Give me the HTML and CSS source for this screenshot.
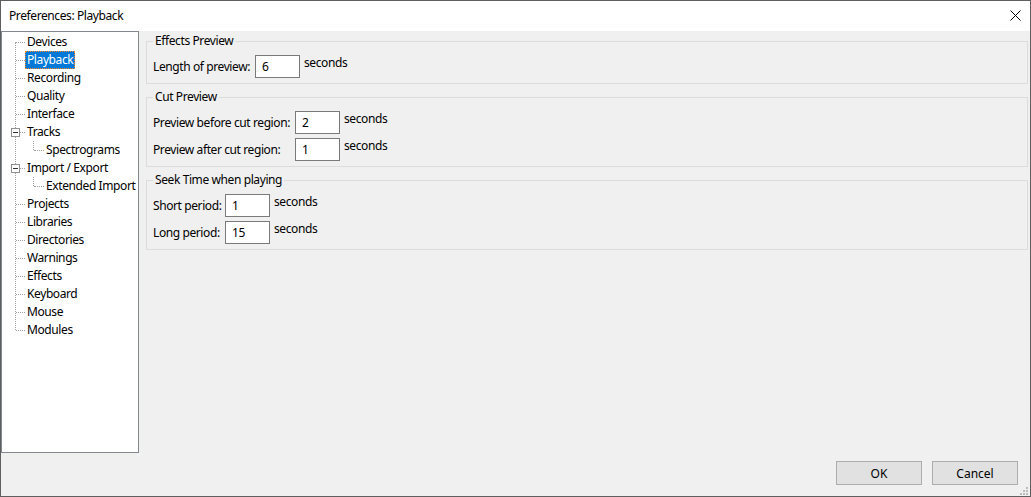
FILE: index.html
```html
<!DOCTYPE html>
<html lang="en">
<head>
    <meta charset="UTF-8">
    <title>Preferences: Playback</title>
    <link rel="stylesheet" href="styles.css">
</head>
<body>
    <div class="window">
        <div class="titlebar">
            <span class="title">Preferences: Playback</span>
            <svg class="close" width="11" height="11" viewBox="0 0 11 11">
                <path d="M0.5 0.5 L10.5 10.5 M10.5 0.5 L0.5 10.5" stroke="#000" stroke-width="1" fill="none"/>
            </svg>
        </div>
        <div class="main">
            <div class="tree">
                <ul class="nodes">
                    <li><span class="label">Devices</span></li>
                    <li><span class="label on">Playback</span></li>
                    <li><span class="label">Recording</span></li>
                    <li><span class="label">Quality</span></li>
                    <li><span class="label">Interface</span></li>
                    <li class="open"><i class="toggle"></i><span class="label">Tracks</span>
                        <ul class="sub">
                            <li><span class="label">Spectrograms</span></li>
                        </ul>
                    </li>
                    <li class="open"><i class="toggle"></i><span class="label">Import / Export</span>
                        <ul class="sub">
                            <li><span class="label">Extended Import</span></li>
                        </ul>
                    </li>
                    <li><span class="label">Projects</span></li>
                    <li><span class="label">Libraries</span></li>
                    <li><span class="label">Directories</span></li>
                    <li><span class="label">Warnings</span></li>
                    <li><span class="label">Effects</span></li>
                    <li><span class="label">Keyboard</span></li>
                    <li><span class="label">Mouse</span></li>
                    <li><span class="label">Modules</span></li>
                </ul>
            </div>
            <div class="panel">
                <fieldset class="group g-effects">
                    <legend>Effects Preview</legend>
                    <div class="rows">
                        <span class="cap">Length of preview:</span><span class="field">6</span><span class="unit">seconds</span>
                    </div>
                </fieldset>
                <fieldset class="group g-cut">
                    <legend>Cut Preview</legend>
                    <div class="rows">
                        <span class="cap">Preview before cut region:</span><span class="field">2</span><span class="unit">seconds</span>
                        <span class="cap">Preview after cut region:</span><span class="field">1</span><span class="unit">seconds</span>
                    </div>
                </fieldset>
                <fieldset class="group g-seek">
                    <legend>Seek Time when playing</legend>
                    <div class="rows">
                        <span class="cap">Short period:</span><span class="field">1</span><span class="unit">seconds</span>
                        <span class="cap">Long period:</span><span class="field">15</span><span class="unit">seconds</span>
                    </div>
                </fieldset>
            </div>
        </div>
        <div class="footer">
            <button class="btn">OK</button>
            <button class="btn">Cancel</button>
        </div>
        <svg class="grip" width="10" height="10" viewBox="0 0 10 10">
            <rect x="7" y="1" width="2" height="2" fill="#bcbcbc"/>
            <rect x="4" y="4" width="2" height="2" fill="#bcbcbc"/>
            <rect x="7" y="4" width="2" height="2" fill="#bcbcbc"/>
            <rect x="1" y="7" width="2" height="2" fill="#bcbcbc"/>
            <rect x="4" y="7" width="2" height="2" fill="#bcbcbc"/>
            <rect x="7" y="7" width="2" height="2" fill="#bcbcbc"/>
        </svg>
    </div>
</body>
</html>
```

FILE: styles.css
```css
*{
    margin: 0;
    padding: 0;
    box-sizing: border-box;
    list-style: none;
}
body{
    font-family: "Noto Sans", "Liberation Sans", sans-serif;
    font-size: 12px;
    letter-spacing: -0.4px;
    color: #000;
    background: #f0f0f0;
}
.window{
    position: relative;
    display: flex;
    flex-direction: column;
    width: 1031px;
    height: 497px;
    border: 1px solid #5f5f5f;
    background: #f0f0f0;
}
.titlebar{
    display: flex;
    align-items: center;
    justify-content: space-between;
    height: 30px;
    padding: 0 9px 1px 8px;
    background: #fff;
}
.title{
    line-height: 16px;
}

/* left tree */
.main{
    display: flex;
    height: 422px;
}
.tree{
    width: 138px;
    height: 100%;
    padding-top: 1px;
    background: #fff;
    border: 1px solid #828790;
}
.nodes, .sub{
    position: relative;
}
.nodes::before{
    content: "";
    position: absolute;
    left: 13px;
    top: 9px;
    bottom: 9px;
    border-left: 1px dotted #a0a0a0;
}
.sub::before{
    content: "";
    position: absolute;
    left: 8px;
    top: 0;
    bottom: 9px;
    border-left: 1px dotted #a0a0a0;
}
.nodes li{
    position: relative;
    padding-left: 23px;
}
.sub li{
    padding-left: 19px;
}
.nodes li::before{
    content: "";
    position: absolute;
    left: 14px;
    top: 9px;
    width: 9px;
    border-top: 1px dotted #a0a0a0;
}
.sub li::before{
    left: 9px;
    width: 10px;
}
.label{
    display: inline-block;
    height: 18px;
    padding: 0 2px;
    line-height: 18px;
    white-space: nowrap;
}
.label.on{
    color: #fff;
    background: #0078d7;
    outline: 1px dotted #ff8728;
    outline-offset: -1px;
}
.toggle{
    position: absolute;
    z-index: 1;
    left: 9px;
    top: 5px;
    width: 9px;
    height: 9px;
    background: #fff;
    border: 1px solid #919191;
}
.toggle::after{
    content: "";
    position: absolute;
    left: 1px;
    top: 3px;
    width: 5px;
    height: 1px;
    background: #333;
}

/* right panel */
.panel{
    flex: 1;
    padding: 2px 2px 0 7px;
}
.group{
    margin-bottom: 5px;
    padding: 0 6px 5px;
    border: 1px solid #dcdcdc;
    min-width: 0;
}
.group legend{
    padding: 0 2px;
    line-height: 16px;
}
.rows{
    display: grid;
    grid-template-columns: 102px 45px auto;
    row-gap: 4px;
    padding-top: 6px;
    white-space: nowrap;
}
.g-cut .rows{
    grid-template-columns: 142px 45px auto;
}
.g-seek .rows{
    grid-template-columns: 72px 45px auto;
}
.cap{
    align-self: center;
    line-height: 16px;
}
.field{
    height: 23px;
    padding: 0 6px;
    line-height: 21px;
    background: #fff;
    border: 1px solid #7a7a7a;
}
.unit{
    align-self: start;
    margin-left: 4px;
    line-height: 16px;
}

/* buttons */
.footer{
    display: flex;
    justify-content: flex-end;
    gap: 10px;
    padding: 8px 12px 0 0;
}
.btn{
    width: 86px;
    height: 24px;
    font: inherit;
    color: #000;
    background: #e1e1e1;
    border: 1px solid #adadad;
}
.grip{
    position: absolute;
    right: 1px;
    bottom: 0;
}
```
